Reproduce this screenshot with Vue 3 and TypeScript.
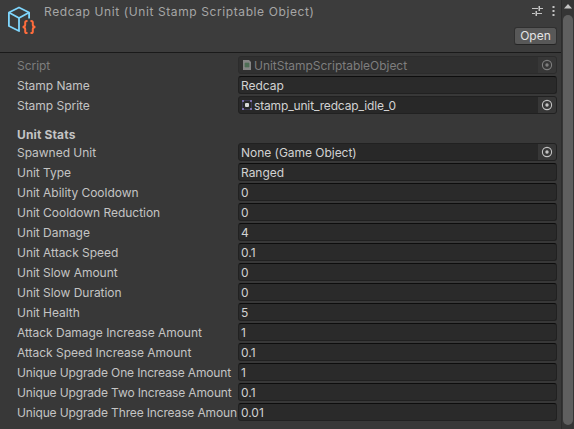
<script setup lang="ts">
interface Field {
  label: string
  value: string
  kind: 'text' | 'object'
  icon?: 'script' | 'sprite'
  disabled?: boolean
}

const assetFields: Field[] = [
  { label: 'Script', value: 'UnitStampScriptableObject', kind: 'object', icon: 'script', disabled: true },
  { label: 'Stamp Name', value: 'Redcap', kind: 'text' },
  { label: 'Stamp Sprite', value: 'stamp_unit_redcap_idle_0', kind: 'object', icon: 'sprite' },
]

const statFields: Field[] = [
  { label: 'Spawned Unit', value: 'None (Game Object)', kind: 'object' },
  { label: 'Unit Type', value: 'Ranged', kind: 'text' },
  { label: 'Unit Ability Cooldown', value: '0', kind: 'text' },
  { label: 'Unit Cooldown Reduction', value: '0', kind: 'text' },
  { label: 'Unit Damage', value: '4', kind: 'text' },
  { label: 'Unit Attack Speed', value: '0.1', kind: 'text' },
  { label: 'Unit Slow Amount', value: '0', kind: 'text' },
  { label: 'Unit Slow Duration', value: '0', kind: 'text' },
  { label: 'Unit Health', value: '5', kind: 'text' },
  { label: 'Attack Damage Increase Amount', value: '1', kind: 'text' },
  { label: 'Attack Speed Increase Amount', value: '0.1', kind: 'text' },
  { label: 'Unique Upgrade One Increase Amount', value: '1', kind: 'text' },
  { label: 'Unique Upgrade Two Increase Amount', value: '0.1', kind: 'text' },
  { label: 'Unique Upgrade Three Increase Amoun', value: '0.01', kind: 'text' },
]

const groups: { title?: string; fields: Field[] }[] = [
  { fields: assetFields },
  { title: 'Unit Stats', fields: statFields },
]
</script>

<template>
  <div class="inspector">
    <main class="panel">
      <header class="header">
        <svg class="asset-icon" width="30" height="30" viewBox="0 0 30 30" fill="none">
          <path d="M13 1.500 23.100 6.500 13 12 2.900 6.500Z M2.900 6.500V20L13 25V12 M23.100 6.500V12.500" stroke="#7fd6fd" stroke-width="1.800" stroke-linejoin="round" />
          <path d="M21.500 15h-.7q-1.600 0-1.600 1.600v2.200q0 1.900-2.500 2.200 2.500.3 2.500 2.200v2.200q0 1.600 1.600 1.600h.7 M24.500 15h.7q1.600 0 1.600 1.600v2.200q0 1.900 2.500 2.200-2.500.3-2.500 2.200v2.200q0 1.600-1.600 1.600h-.7" stroke="#ff6c3c" stroke-width="2" />
        </svg>
        <h1 class="title">Redcap Unit (Unit Stamp Scriptable Object)</h1>
        <div class="actions">
          <div class="tools">
            <svg width="11" height="10" viewBox="0 0 11 10" fill="#c4c4c4">
              <path d="M0 2h6v1H0zM8 2h3v1H8zM6.500 0H8v5H6.500zM0 7h3v1H0zM5 7h5v1H5zM3.500 5H5v5H3.500z" />
            </svg>
            <svg width="3" height="10" viewBox="0 0 3 10" fill="#c4c4c4">
              <path d="M.5 0h2v2h-2zM.5 4h2v2h-2zM.5 8h2v2h-2z" />
            </svg>
          </div>
          <button class="open">Open</button>
        </div>
      </header>

      <section v-for="(group, i) in groups" :key="i" class="group">
        <h2 v-if="group.title" class="group-title">{{ group.title }}</h2>
        <div v-for="field in group.fields" :key="field.label" class="row" :class="{ disabled: field.disabled }">
          <span class="label" :class="{ long: field.label.length > 30 }">{{ field.label }}</span>
          <div class="field" :class="[field.kind, field.icon]">
            <svg v-if="field.icon === 'script'" class="field-icon" width="10" height="12" viewBox="0 0 10 12">
              <path d="M1 1h6l2 2v8H1z" fill="#858585" />
              <path d="M4 3.500v5M6 3.500v5M2.500 5h5M2.500 7h5" stroke="#3d6646" />
            </svg>
            <svg v-if="field.icon === 'sprite'" class="field-icon" width="10" height="10" viewBox="0 0 10 10">
              <path d="M.5.5h9v9h-9z" fill="none" stroke="#3c3852" />
              <path d="M0 0h2v2H0zM8 0h2v2H8zM0 8h2v2H0zM8 8h2v2H8z" fill="#7b70ad" />
              <rect x="3" y="3" width="4" height="4" rx="1" fill="#d8d8d8" />
            </svg>
            <span class="value">{{ field.value }}</span>
            <span v-if="field.kind === 'object'" class="picker">
              <svg width="12" height="12" viewBox="0 0 12 12">
                <circle cx="6" cy="6" r="4.600" fill="none" stroke="currentColor" stroke-width="1.100" />
                <circle cx="6" cy="6" r="1.700" fill="currentColor" />
              </svg>
            </span>
          </div>
        </div>
      </section>
    </main>

    <aside class="scrollbar">
      <svg class="arrow" width="8" height="5" viewBox="0 0 8 5"><path d="M4 0 8 4.500H0Z" fill="#c4c4c4" /></svg>
      <div class="thumb"></div>
    </aside>
  </div>
</template>

<style>
body {
  background: #383838;
  overflow: hidden;
}
</style>

<style scoped>
.inspector {
  display: flex;
  box-sizing: border-box;
  height: 429px;
  background: #383838;
  color: #c4c4c4;
  font: 12px/18px Inter, sans-serif;
  letter-spacing: -0.03px;
}
.panel {
  flex: 1;
  min-width: 0;
}
.header {
  display: flex;
  box-sizing: border-box;
  height: 53px;
  padding: 5px 4px 0 6px;
  background: #3c3c3c;
  border-bottom: 1px solid #1a1a1a;
}
.asset-icon {
  margin-top: 1px;
}
.title {
  flex: 1;
  margin: -2px 0 0 8px;
  font-size: 12px;
  font-weight: 400;
  letter-spacing: 0.6px;
  color: #a6a6a6;
  white-space: nowrap;
}
.actions {
  display: flex;
  flex-direction: column;
  align-items: flex-end;
}
.tools {
  display: flex;
  gap: 9px;
  height: 21px;
  padding: 1px 2px 0 0;
}
.open {
  box-sizing: border-box;
  width: 43px;
  height: 18px;
  margin: 0;
  padding: 0;
  border: 1px solid #303030;
  border-bottom-color: #242424;
  border-radius: 3px;
  background: #585858;
  color: #e4e4e4;
  font: inherit;
  line-height: 16px;
  letter-spacing: 0;
}
.group {
  display: flex;
  flex-direction: column;
  gap: 2px;
  padding: 3px 4px 0 17px;
}
.group-title {
  height: 18px;
  margin: 8px 0 -2px;
  font-size: 12px;
  font-weight: 700;
  line-height: 19px;
  letter-spacing: 0.15px;
}
.row {
  display: flex;
  height: 18px;
}
.label {
  width: 220px;
  margin-right: 1px;
  overflow: hidden;
  white-space: nowrap;
  line-height: 19px;
}
.label.long {
  letter-spacing: -0.15px;
}
.field {
  display: flex;
  flex: 1;
  align-items: center;
  box-sizing: border-box;
  padding-left: 2px;
  overflow: hidden;
  border: 1px solid #212121;
  border-top-color: #0d0d0d;
  border-radius: 3px;
  background: #2a2a2a;
}
.field.object {
  border-top-color: #212121;
  background: #282828;
}
.field-icon {
  flex: none;
  margin: 0 2px 0 1px;
}
.value {
  flex: 1;
  padding-top: 2px;
  color: #d2d2d2;
  white-space: nowrap;
  line-height: 18px;
}
.sprite .value {
  letter-spacing: -0.15px;
}
.picker {
  display: flex;
  align-items: center;
  justify-content: center;
  width: 18px;
  height: 16px;
  background: #373737;
  color: #c4c4c4;
}
.disabled .label,
.disabled .value,
.disabled .picker {
  color: #7e7e7e;
}
.disabled .field {
  background: #303030;
  border-color: #2c2c2c;
}
.scrollbar {
  display: flex;
  flex-direction: column;
  align-items: center;
  box-sizing: border-box;
  width: 13px;
  padding: 4px 0;
  border-left: 1px solid #2c2c2c;
  background: #353535;
}
.arrow {
  flex: none;
  margin-bottom: 6px;
}
.thumb {
  flex: 1;
  width: 10px;
  border-radius: 5px;
  background: #5f5f5f;
}
</style>
